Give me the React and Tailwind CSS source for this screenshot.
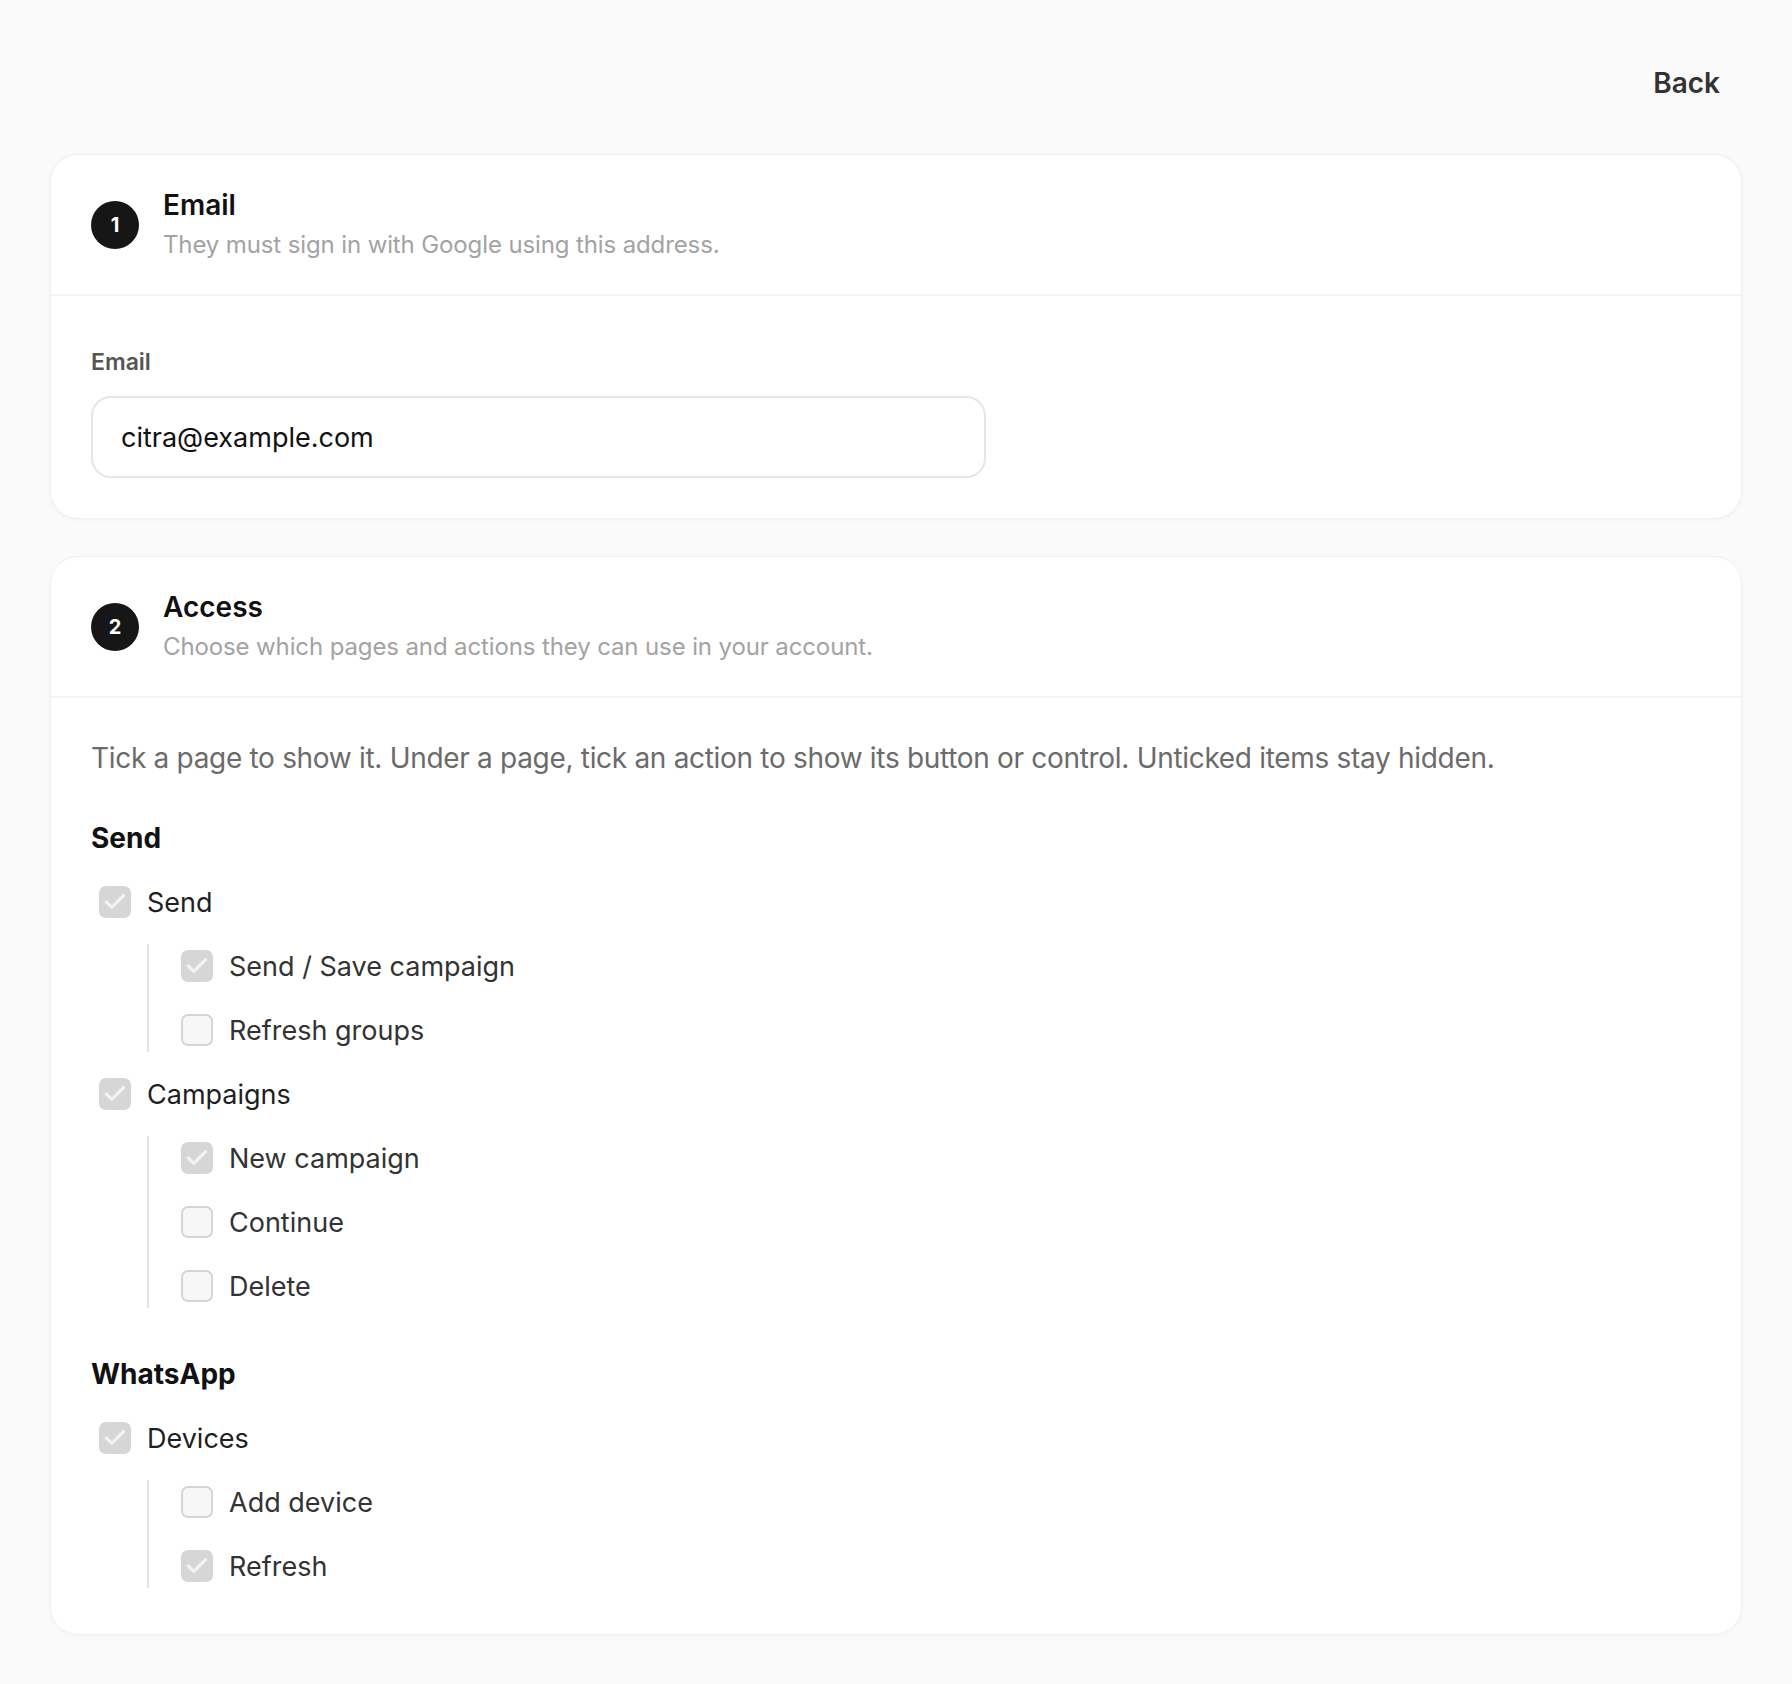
import { Check } from "lucide-react";

const GROUPS = [
  {
    title: "Send",
    pages: [
      {
        label: "Send",
        checked: true,
        actions: [
          { label: "Send / Save campaign", checked: true },
          { label: "Refresh groups", checked: false },
        ],
      },
      {
        label: "Campaigns",
        checked: true,
        actions: [
          { label: "New campaign", checked: true },
          { label: "Continue", checked: false },
          { label: "Delete", checked: false },
        ],
      },
    ],
  },
  {
    title: "WhatsApp",
    pages: [
      {
        label: "Devices",
        checked: true,
        actions: [
          { label: "Add device", checked: false },
          { label: "Refresh", checked: true },
        ],
      },
    ],
  },
];

function Box({ checked }) {
  return checked ? (
    <span className="flex h-[32px] w-[32px] shrink-0 items-center justify-center rounded-[7px] bg-[#d6d6d6]">
      <Check className="h-[26px] w-[26px] text-[#f2f2f2]" strokeWidth={3} />
    </span>
  ) : (
    <span className="h-[32px] w-[32px] shrink-0 rounded-[7px] border-2 border-[#d5d5d5] bg-[#f7f7f7]" />
  );
}

function Row({ label, checked, strong }) {
  return (
    <label className="flex h-[44px] items-center gap-[16px]">
      <Box checked={checked} />
      <span className={"text-[27px] leading-none " + (strong ? "text-[#1f1f1f]" : "text-[#333]")}>
        {label}
      </span>
    </label>
  );
}

function Step({ n, title, sub }) {
  return (
    <div className="flex h-[141px] items-center gap-[24px] border-b-2 border-[#f3f3f3] px-[40px]">
      <div className="flex h-[48px] w-[48px] shrink-0 items-center justify-center rounded-full bg-[#161616] text-[20px] font-bold text-white">
        {n}
      </div>
      <div>
        <div className="text-[28px] font-semibold leading-[36px] text-[#111]">{title}</div>
        <div className="mt-[5px] text-[24px] leading-[34px] tracking-[-0.005em] text-[#a3a3a3]">{sub}</div>
      </div>
    </div>
  );
}

export default function App() {
  return (
    <div className="min-h-screen bg-[#fafafa] px-[50px] pb-[50px] pt-[59px] font-['Inter',sans-serif]">
      <div className="mb-[47px] flex justify-end">
        <button className="flex h-[48px] items-center px-[22px] text-[28px] font-semibold text-[#333]">
          Back
        </button>
      </div>

      {/* Step 1: email */}
      <section className="rounded-[28px] border border-[#f0f0f0] bg-white shadow-[0_1px_4px_rgba(0,0,0,0.03)]">
        <Step n="1" title="Email" sub="They must sign in with Google using this address." />
        <div className="px-[40px] pb-[40px] pt-[50px]">
          <div className="mb-[18px] text-[23px] font-semibold leading-[32px] text-[#555]">Email</div>
          <input
            readOnly
            value="citra@example.com"
            className="h-[82px] w-[895px] rounded-[20px] border-2 border-[#e6e6e6] bg-white px-[28px] text-[27px] text-[#111] outline-none"
          />
        </div>
      </section>

      {/* Step 2: access */}
      <section className="mt-[37px] rounded-[28px] border border-[#f0f0f0] bg-white shadow-[0_1px_4px_rgba(0,0,0,0.03)]">
        <Step n="2" title="Access" sub="Choose which pages and actions they can use in your account." />
        <div className="px-[40px] pb-[46px] pt-[40px]">
          <p className="text-[28px] leading-[40px] tracking-[-0.011em] text-[#6b6b6b]">
            Tick a page to show it. Under a page, tick an action to show its button or control. Unticked items stay hidden.
          </p>
          <div className="mt-[42px] flex flex-col gap-[48px]">
            {GROUPS.map((g) => (
              <div key={g.title}>
                <div className="text-[28px] font-bold leading-[36px] text-[#111]">{g.title}</div>
                <div className="mt-[24px] flex flex-col gap-[20px] pl-[8px]">
                  {g.pages.map((p) => (
                    <div key={p.label} className="flex flex-col gap-[20px]">
                      <Row label={p.label} checked={p.checked} strong />
                      <div className="ml-[48px] flex flex-col gap-[20px] border-l-2 border-[#e5e5e5] pl-[32px]">
                        {p.actions.map((a) => (
                          <Row key={a.label} label={a.label} checked={a.checked} />
                        ))}
                      </div>
                    </div>
                  ))}
                </div>
              </div>
            ))}
          </div>
        </div>
      </section>
    </div>
  );
}
